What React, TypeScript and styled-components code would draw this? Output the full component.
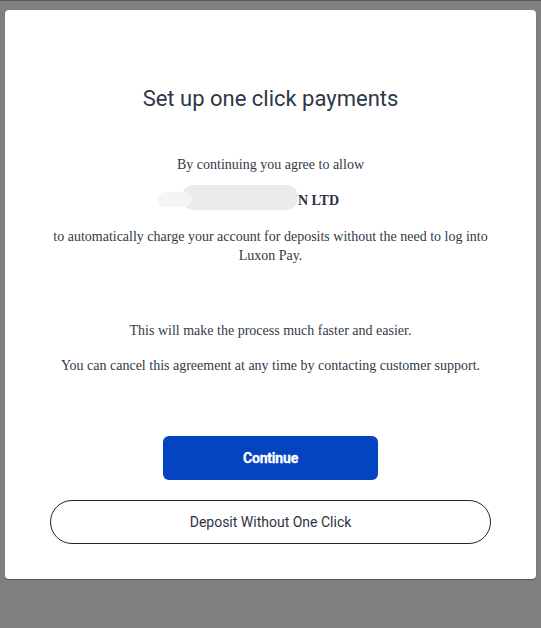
import React from "react";
import styled, { createGlobalStyle } from "styled-components";

const Global = createGlobalStyle`
  html, body { margin: 0; padding: 0; }
  body {
    background: #808080;
    border-top: 1px solid #5c5c5c;
    min-height: 627px;
  }
`;

const Page = styled.div`
  padding: 9px 5px 0 5px;
`;

const Modal = styled.div`
  width: 531px;
  height: 569px;
  box-sizing: border-box;
  background: #ffffff;
  border-radius: 4px;
  box-shadow: 0 1px 1px rgba(0, 0, 0, 0.35);
  padding: 76px 45px 0 45px;
  display: flex;
  flex-direction: column;
  align-items: center;
`;

const Title = styled.h1`
  margin: 0;
  font-family: Roboto, "Liberation Sans", sans-serif;
  font-weight: 400;
  font-size: 22px;
  line-height: 26px;
  color: #2d3748;
  text-align: center;
`;

const Text = styled.p<{ $gap: number }>`
  margin: ${(p) => p.$gap}px 0 0 0;
  font-family: "Liberation Serif", "Times New Roman", serif;
  font-size: 14px;
  line-height: 19px;
  color: #333a45;
  text-align: center;
  width: 100%;
`;

const Company = styled(Text)`
  font-weight: 700;
  color: #2d3340;
`;

const Hidden = styled.span`
  position: relative;
  display: inline-block;
  width: 96px;
  height: 19px;
  vertical-align: top;
`;

const Blob = styled.span`
  position: absolute;
  left: -20px;
  top: -6px;
  width: 116px;
  height: 25px;
  border-radius: 12px;
  background: #ebebeb;
  &::before {
    content: "";
    position: absolute;
    left: -24px;
    top: 7px;
    width: 34px;
    height: 15px;
    border-radius: 8px;
    background: #f5f5f5;
  }
`;

const PrimaryButton = styled.button`
  margin-top: 61px;
  width: 215px;
  height: 44px;
  border: none;
  border-radius: 6px;
  background: #0544c0;
  color: #ffffff;
  font-family: Roboto, "Liberation Sans", sans-serif;
  font-weight: 700;
  font-size: 14px;
  letter-spacing: -0.2px;
  -webkit-text-stroke: 0.3px #ffffff;
  cursor: pointer;
`;

const OutlineButton = styled.button`
  margin-top: 20px;
  width: 441px;
  height: 44px;
  border: 1px solid #1f2430;
  border-radius: 22px;
  background: #ffffff;
  color: #2d3340;
  font-family: Roboto, "Liberation Sans", sans-serif;
  font-weight: 400;
  font-size: 14px;
  cursor: pointer;
`;

export default function App() {
  return (
    <>
      <Global />
      <Page>
        <Modal>
          <Title>Set up one click payments</Title>
          <Text $gap={43}>By continuing you agree to allow</Text>
          <Company $gap={17}>
            <Hidden>
              <Blob />
            </Hidden>
            N LTD
          </Company>
          <Text $gap={17}>
            to automatically charge your account for deposits without the need to log into Luxon Pay.
          </Text>
          <Text $gap={56}>This will make the process much faster and easier.</Text>
          <Text $gap={16}>You can cancel this agreement at any time by contacting customer support.</Text>
          <PrimaryButton>Continue</PrimaryButton>
          <OutlineButton>Deposit Without One Click</OutlineButton>
        </Modal>
      </Page>
    </>
  );
}
